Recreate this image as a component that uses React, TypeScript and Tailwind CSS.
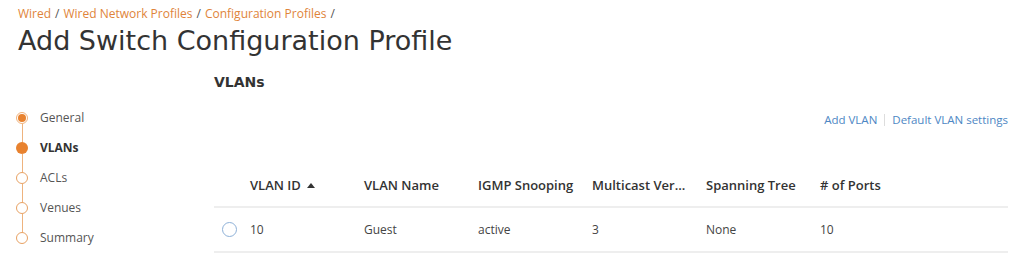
import { useState } from "react";

const steps = [
  { label: "General", state: "done" },
  { label: "VLANs", state: "current" },
  { label: "ACLs", state: "todo" },
  { label: "Venues", state: "todo" },
  { label: "Summary", state: "todo" },
];

const columns = ["VLAN ID", "VLAN Name", "IGMP Snooping", "Multicast Ver...", "Spanning Tree", "# of Ports"];

const rows = [
  { id: "10", name: "Guest", igmp: "active", multicast: "3", stp: "None", ports: "10" },
];

const StepDot = ({ state }: { state: string }) => {
  if (state === "current") {
    return <div className="w-[12px] h-[12px] rounded-full bg-[#e8822f]" />;
  }
  if (state === "done") {
    return (
      <div className="w-[12px] h-[12px] rounded-full border border-[#f0b27c] bg-white flex items-center justify-center">
        <div className="w-[8px] h-[8px] rounded-full bg-[#e8822f]" />
      </div>
    );
  }
  return <div className="w-[12px] h-[12px] rounded-full border border-[#e8a264] bg-white" />;
};

const App = () => {
  const [selected, setSelected] = useState<string | null>(null);

  return (
    <div className="w-[1024px] h-[276px] bg-white text-[#333] overflow-hidden" style={{ fontFamily: "'Open Sans', sans-serif" }}>
      <div className="pl-[18px] pt-[6px]">
        <div className="text-[12px] leading-[16px] text-[#e0843a] flex gap-[4px]">
          <span>Wired</span>
          <span className="text-[#555]">/</span>
          <span>Wired Network Profiles</span>
          <span className="text-[#555]">/</span>
          <span>Configuration Profiles</span>
          <span className="text-[#555]">/</span>
        </div>
        <h1 className="text-[27px] leading-[36px] text-[#333] mt-[1px]" style={{ fontFamily: "'DejaVu Sans', sans-serif" }}>
          Add Switch Configuration Profile
        </h1>
      </div>

      <div className="flex mt-[10px]">
        <div className="w-[196px] pl-[16px] pt-[34px]">
          {steps.map((s, i) => (
            <div key={s.label} className="relative flex items-center h-[30px]">
              {i < steps.length - 1 && (
                <div className="absolute left-[5.5px] top-[21px] h-[24px] w-[1px] bg-[#eeb37e]" />
              )}
              <StepDot state={s.state} />
              <span className={`ml-[12px] text-[12px] ${s.state === "current" ? "font-bold text-[#333]" : "text-[#555]"}`}>
                {s.label}
              </span>
            </div>
          ))}
        </div>

        <div className="flex-1 pl-[18px] pr-[16px]">
          <h2 className="text-[14px] font-bold leading-[20px] text-[#333] pt-[3px]" style={{ fontFamily: "'DejaVu Sans', sans-serif" }}>
            VLANs
          </h2>
          <div className="flex justify-end items-center mt-[19px] text-[11.5px] text-[#4d87c4]">
            <span>Add VLAN</span>
            <span className="mx-[7px] h-[12px] w-[1px] bg-[#ddd]" />
            <span>Default VLAN settings</span>
          </div>

          <div className="mt-[36px]">
            <div className="flex items-center h-[44px] border-b-2 border-[#eeeeee] text-[13px] font-semibold text-[#333]">
              <div className="w-[36px]" />
              {columns.map((c, i) => (
                <div key={c} className="w-[114px] flex items-center gap-[6px]">
                  {c}
                  {i === 0 && (
                    <svg width="8" height="5" viewBox="0 0 8 5">
                      <path d="M0 5 L4 0 L8 5 Z" fill="#333" />
                    </svg>
                  )}
                </div>
              ))}
            </div>
            {rows.map((r) => (
              <div key={r.id} className="flex items-center h-[45px] border-b-2 border-[#eeeeee] text-[12px] text-[#444]">
                <div className="w-[36px] pl-[8px]">
                  <button
                    onClick={() => setSelected(r.id)}
                    className="w-[15px] h-[15px] rounded-full border border-[#8eb1d8] bg-white flex items-center justify-center"
                  >
                    {selected === r.id && <span className="w-[7px] h-[7px] rounded-full bg-[#4d87c4]" />}
                  </button>
                </div>
                <div className="w-[114px]">{r.id}</div>
                <div className="w-[114px]">{r.name}</div>
                <div className="w-[114px]">{r.igmp}</div>
                <div className="w-[114px]">{r.multicast}</div>
                <div className="w-[114px]">{r.stp}</div>
                <div className="w-[114px]">{r.ports}</div>
              </div>
            ))}
          </div>
        </div>
      </div>
    </div>
  );
};

export default App;
